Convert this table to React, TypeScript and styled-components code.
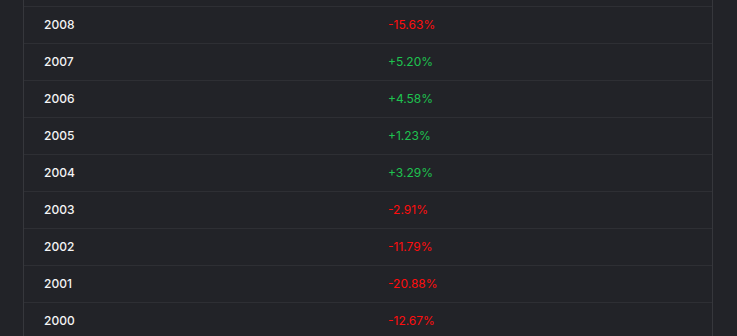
import React from 'react';
import styled, { createGlobalStyle } from 'styled-components';

const GlobalStyle = createGlobalStyle`
  html, body {
    margin: 0;
    padding: 0;
    background: #222328;
    font-family: Inter, "Noto Sans", sans-serif;
    -webkit-font-smoothing: antialiased;
  }
`;

const Page = styled.div`
  height: 336px;
  overflow: hidden;
  padding-left: 23px;
`;

const Table = styled.div`
  width: 688px;
  min-height: 336px;
  padding-top: 6px;
  border-left: 1px solid #36373c;
  border-right: 1px solid #36373c;
`;

const Row = styled.div`
  display: grid;
  grid-template-columns: 1fr 1fr;
  height: 37px;
  box-sizing: border-box;
  padding-bottom: 2px;
  border-top: 1px solid #2e2f34;
  align-items: center;
`;

const Year = styled.div`
  padding-left: 20px;
  font-size: 12px;
  font-weight: 500;
  color: #f4f4f5;
`;

const Change = styled.div<{ $up: boolean }>`
  padding-left: 20px;
  font-size: 12px;
  font-weight: 400;
  color: ${p => (p.$up ? '#1ec24f' : '#ff0d0d')};
`;

const rows = [
  { year: 2008, value: -15.63 },
  { year: 2007, value: 5.2 },
  { year: 2006, value: 4.58 },
  { year: 2005, value: 1.23 },
  { year: 2004, value: 3.29 },
  { year: 2003, value: -2.91 },
  { year: 2002, value: -11.79 },
  { year: 2001, value: -20.88 },
  { year: 2000, value: -12.67 },
];

const App: React.FC = () => {
  return (
    <>
      <GlobalStyle />
      <Page>
        <Table>
          {rows.map(r => (
            <Row key={r.year}>
              <Year>{r.year}</Year>
              <Change $up={r.value >= 0}>
                {(r.value >= 0 ? '+' : '-') + Math.abs(r.value).toFixed(2) + '%'}
              </Change>
            </Row>
          ))}
        </Table>
      </Page>
    </>
  );
};

export default App;
